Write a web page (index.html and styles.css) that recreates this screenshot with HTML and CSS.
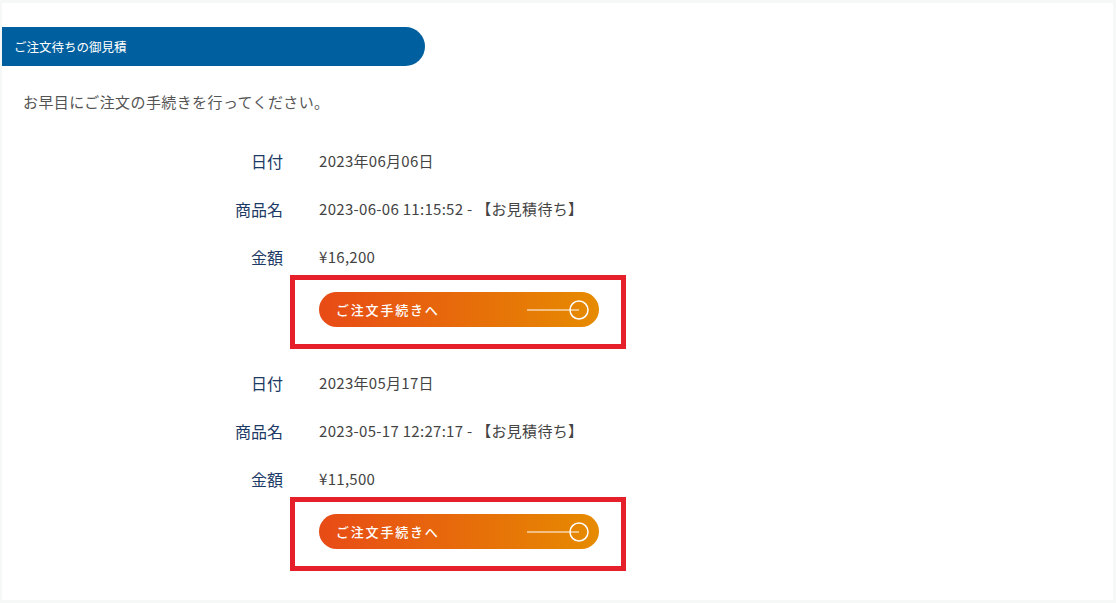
FILE: index.html
```html
<!DOCTYPE html>
<html lang="ja">
<head>
    <meta charset="UTF-8">
    <meta name="viewport" content="width=device-width, initial-scale=1.0">
    <title>ご注文待ちの御見積</title>
    <link rel="stylesheet" href="styles.css">
</head>
<body>

<div class="panel">
    <h2 class="section-title">ご注文待ちの御見積</h2>
    <p class="intro">お早目にご注文の手続きを行ってください。</p>

    <div class="quote">
        <dl class="quote-info">
            <dt>日付</dt>
            <dd>2023年06月06日</dd>
            <dt>商品名</dt>
            <dd>2023-06-06 11:15:52 - 【お見積待ち】</dd>
            <dt>金額</dt>
            <dd>¥16,200</dd>
        </dl>
        <div class="highlight">
            <a href="#" class="order-btn">
                <span>ご注文手続きへ</span>
                <svg width="62" height="20" viewBox="0 0 62 20">
                    <line x1="0" y1="10" x2="52" y2="10" stroke="#fff" stroke-width="1.2"/>
                    <circle cx="52" cy="10" r="9" fill="none" stroke="#fff" stroke-width="1.5"/>
                </svg>
            </a>
        </div>
    </div>

    <div class="quote">
        <dl class="quote-info">
            <dt>日付</dt>
            <dd>2023年05月17日</dd>
            <dt>商品名</dt>
            <dd>2023-05-17 12:27:17 - 【お見積待ち】</dd>
            <dt>金額</dt>
            <dd>¥11,500</dd>
        </dl>
        <div class="highlight">
            <a href="#" class="order-btn">
                <span>ご注文手続きへ</span>
                <svg width="62" height="20" viewBox="0 0 62 20">
                    <line x1="0" y1="10" x2="52" y2="10" stroke="#fff" stroke-width="1.2"/>
                    <circle cx="52" cy="10" r="9" fill="none" stroke="#fff" stroke-width="1.5"/>
                </svg>
            </a>
        </div>
    </div>
</div>

</body>
</html>
```

FILE: styles.css
```css
body {
    margin: 0;
    padding: 3px 3px 3px 2px;
    background-color: #f6f7f7;
    font-family: "Noto Sans CJK JP", "Noto Sans", sans-serif;
    color: #444;
}
.panel {
    background-color: #fff;
    height: 597px;
    padding-top: 24px;
    box-sizing: border-box;
}
.section-title {
    width: 423px;
    height: 39px;
    margin: 0;
    padding-left: 12px;
    box-sizing: border-box;
    background-color: #005f9e;
    border-radius: 0 20px 20px 0;
    color: #fff;
    font-size: 12.5px;
    font-weight: 400;
    line-height: 39px;
}
.intro {
    margin: 24px 0 0 21px;
    font-size: 15px;
    line-height: 24px;
    letter-spacing: 0.4px;
    color: #555;
}
.quote {
    margin-top: 35px;
}
.quote + .quote {
    margin-top: 22px;
}
.quote-info {
    display: grid;
    grid-template-columns: 281px auto;
    column-gap: 36px;
    row-gap: 24px;
    margin: 0;
    font-size: 15px;
    line-height: 24px;
}
.quote-info dt {
    text-align: right;
    font-size: 16px;
    color: #1d3a66;
}
.quote-info dd {
    margin: 0;
    letter-spacing: 0.3px;
    color: #444;
}
.highlight {
    width: 336px;
    margin: 6px 0 0 288px;
    padding: 12px 22px 17px 24px;
    border: 5px solid #e5202a;
    box-sizing: border-box;
}
.order-btn {
    display: flex;
    align-items: center;
    justify-content: space-between;
    width: 280px;
    height: 35px;
    padding: 0 10px 0 17px;
    box-sizing: border-box;
    border-radius: 18px;
    background: linear-gradient(90deg, #e84b16, #e68b00);
    color: #fff;
    font-size: 13px;
    font-weight: 500;
    letter-spacing: 1.8px;
    text-decoration: none;
}
.order-btn svg {
    display: block;
}
```
